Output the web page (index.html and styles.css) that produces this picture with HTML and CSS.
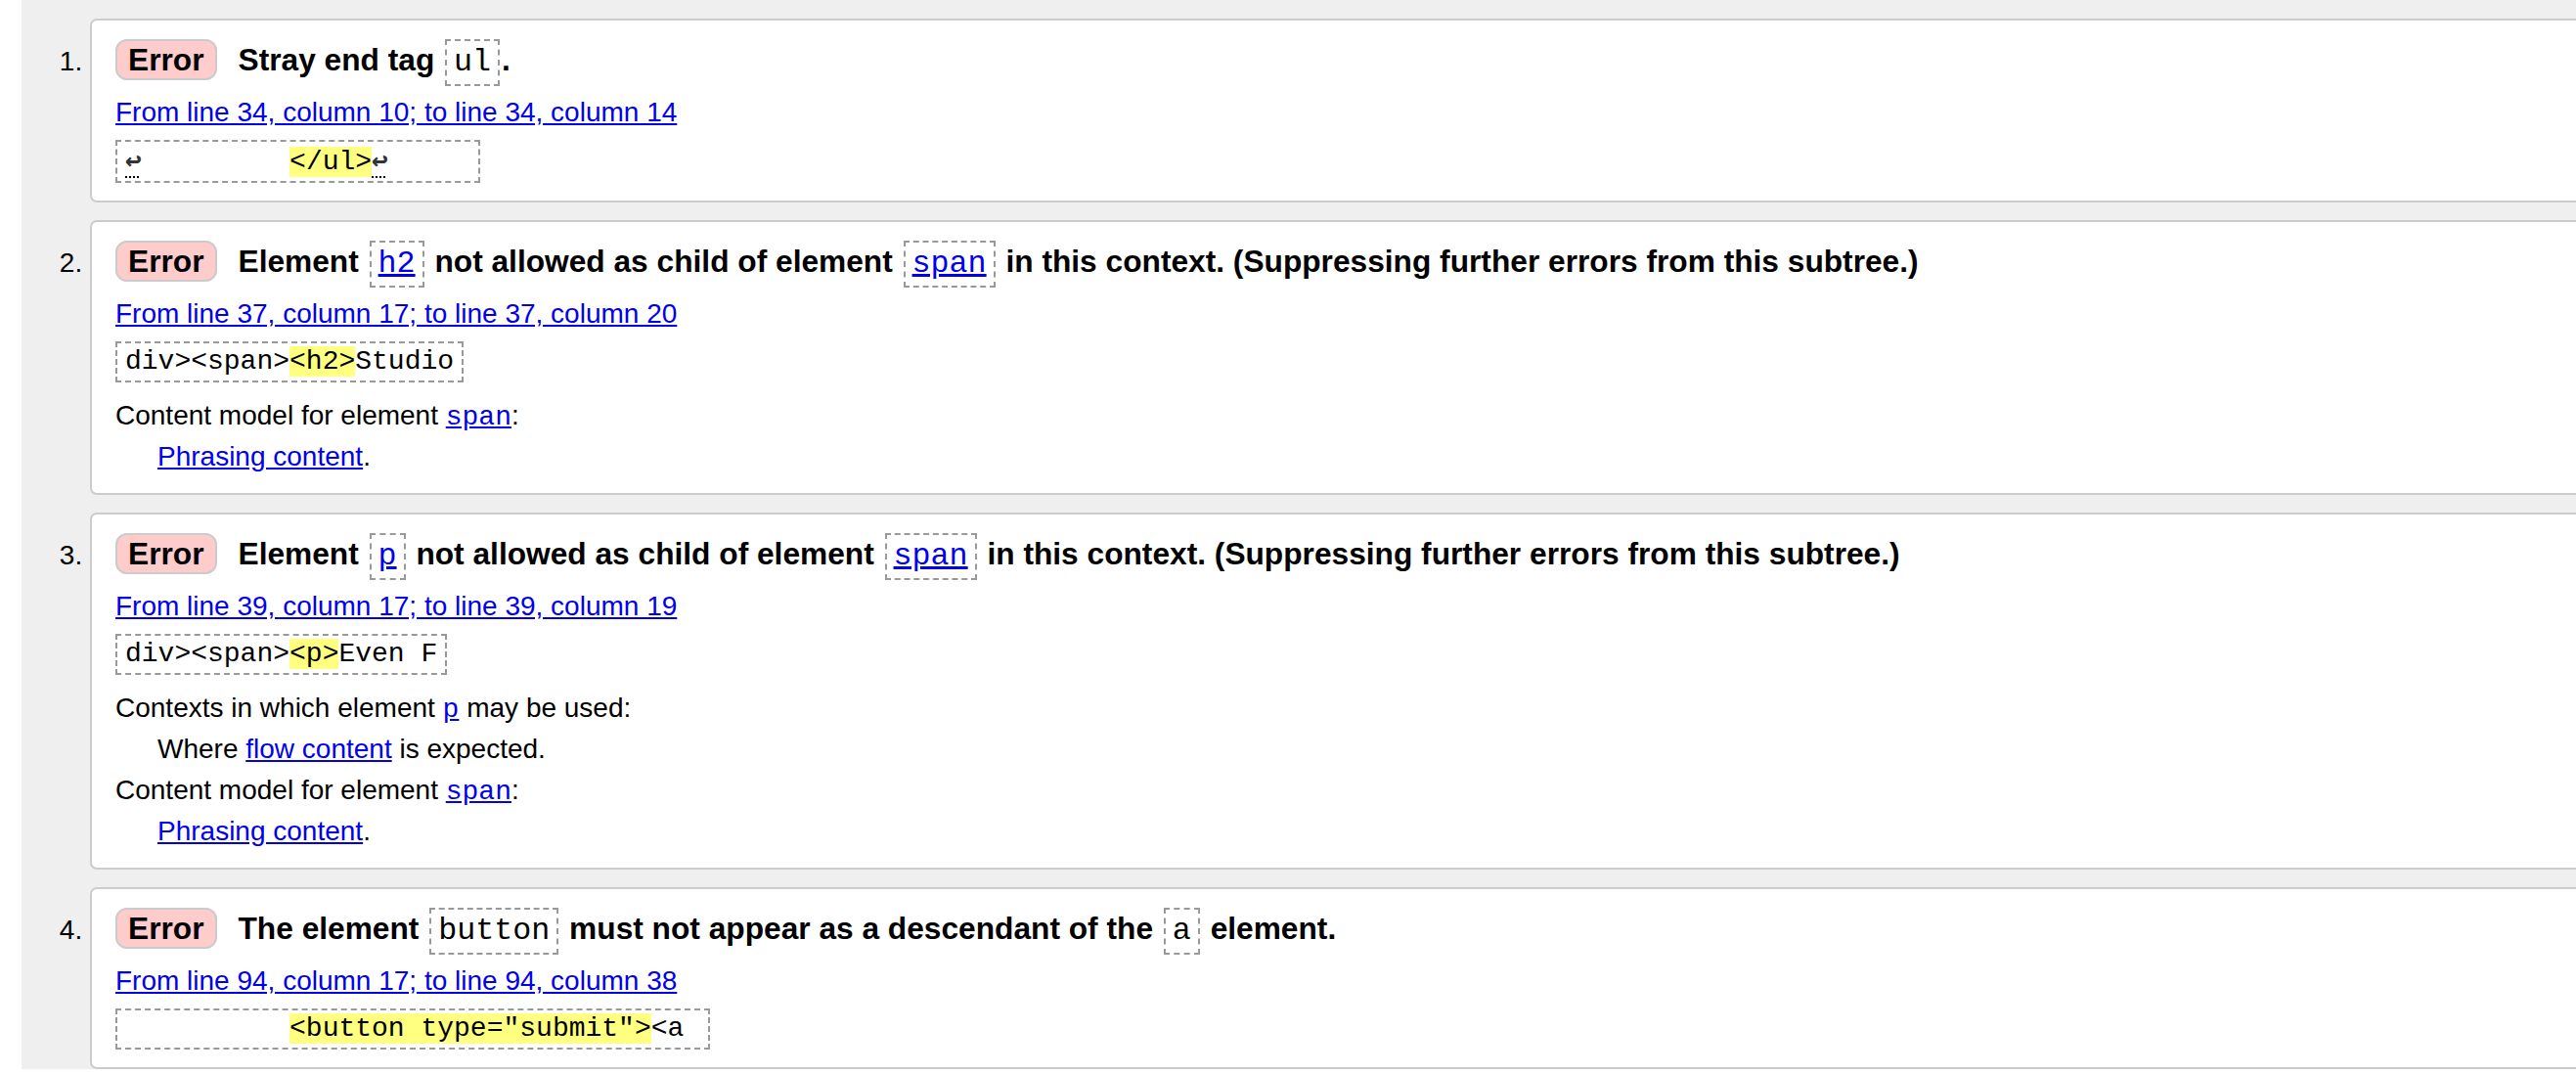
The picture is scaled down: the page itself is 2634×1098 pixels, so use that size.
FILE: index.html
```html
<!DOCTYPE html>
<html lang="en">
<head>
<meta charset="utf-8">
<title>Validation messages</title>
<link rel="stylesheet" href="styles.css">
</head>
<body>
<ol class="messages">
  <li class="msg">
    <p class="head"><strong class="badge">Error</strong><span>Stray end tag <code class="tag">ul</code>.</span></p>
    <p class="loc"><a href="#l34c10">From line 34, column 10; to line 34, column 14</a></p>
    <div class="extract-row"><code class="extract"><span class="lf">↩</span>         <b>&lt;/ul&gt;</b><span class="lf">↩</span>     </code></div>
  </li>
  <li class="msg">
    <p class="head"><strong class="badge">Error</strong><span>Element <code class="tag"><a href="#h2">h2</a></code> not allowed as child of element <code class="tag"><a href="#span">span</a></code> in this context. (Suppressing further errors from this subtree.)</span></p>
    <p class="loc"><a href="#l37c17">From line 37, column 17; to line 37, column 20</a></p>
    <div class="extract-row"><code class="extract">div&gt;&lt;span&gt;<b>&lt;h2&gt;</b>Studio</code></div>
    <p class="note">Content model for element <a href="#span"><code>span</code></a>:</p>
    <p class="note indent"><a href="#phrasing">Phrasing content</a>.</p>
  </li>
  <li class="msg">
    <p class="head"><strong class="badge">Error</strong><span>Element <code class="tag"><a href="#p">p</a></code> not allowed as child of element <code class="tag"><a href="#span">span</a></code> in this context. (Suppressing further errors from this subtree.)</span></p>
    <p class="loc"><a href="#l39c17">From line 39, column 17; to line 39, column 19</a></p>
    <div class="extract-row"><code class="extract">div&gt;&lt;span&gt;<b>&lt;p&gt;</b>Even F</code></div>
    <p class="note">Contexts in which element <a href="#p"><code>p</code></a> may be used:</p>
    <p class="note indent">Where <a href="#flow">flow content</a> is expected.</p>
    <p class="note">Content model for element <a href="#span"><code>span</code></a>:</p>
    <p class="note indent"><a href="#phrasing">Phrasing content</a>.</p>
  </li>
  <li class="msg">
    <p class="head"><strong class="badge">Error</strong><span>The element <code class="tag">button</code> must not appear as a descendant of the <code class="tag">a</code> element.</span></p>
    <p class="loc"><a href="#l94c17">From line 94, column 17; to line 94, column 38</a></p>
    <div class="extract-row"><code class="extract">          <b>&lt;button type="submit"&gt;</b>&lt;a </code></div>
  </li>
</ol>
</body>
</html>
```
FILE: styles.css
```css
html, body {
  margin: 0;
  padding: 0;
  overflow: hidden;
  background: #ffffff;
}

body {
  font-family: "Liberation Sans", Arial, Helvetica, sans-serif;
  font-size: 28px;
  color: #000000;
}

a {
  color: #0000ee;
  text-decoration: underline;
}

.messages {
  margin: 0 0 0 22px;
  padding: 19px 0 0 70px;
  background: #efefef;
  list-style: decimal;
}

.msg {
  margin: 0 -12px 18px 0;
  padding: 17px 24px 16px;
  background: #ffffff;
  border: 2px solid #cccccc;
  border-radius: 7px;
  line-height: 42px;
}

.msg p {
  margin: 0;
}

.head {
  font-size: 31.7px;
  font-weight: bold;
  line-height: 46px;
  margin-bottom: 10px !important;
}

.badge {
  background: #ffcccc;
  border: 2px solid #cccccc;
  border-radius: 12px;
  padding: 1px 11px;
  margin-right: 22px;
}

code {
  font-family: "Liberation Mono", "Courier New", monospace;
  font-weight: normal;
  line-height: 1;
}

.tag {
  font-size: 1em;
  border: 2px dashed #999999;
  padding: 4px 7px;
  margin: 0 2px;
}

.loc {
  line-height: 42px;
}

.extract-row {
  padding: 7px 0 2px;
  line-height: 0;
}

.extract {
  display: inline-block;
  white-space: pre;
  font-size: 28px;
  line-height: 32px;
  border: 2px dashed #999999;
  padding: 3px 8px;
}

.extract b {
  font-weight: normal;
  background: #ffff80;
}

.lf {
  font-family: "DejaVu Sans Mono", "Liberation Mono", monospace;
  font-weight: bold;
  color: #333333;
  text-decoration: underline dotted #000000;
  text-decoration-thickness: 2px;
  text-underline-offset: 7px;
}

.note {
  margin-top: 11px !important;
  line-height: 42px;
}

.note + .note {
  margin-top: 0 !important;
}

.indent {
  margin-left: 43px !important;
}

.note code {
  font-size: 28px;
}
```
